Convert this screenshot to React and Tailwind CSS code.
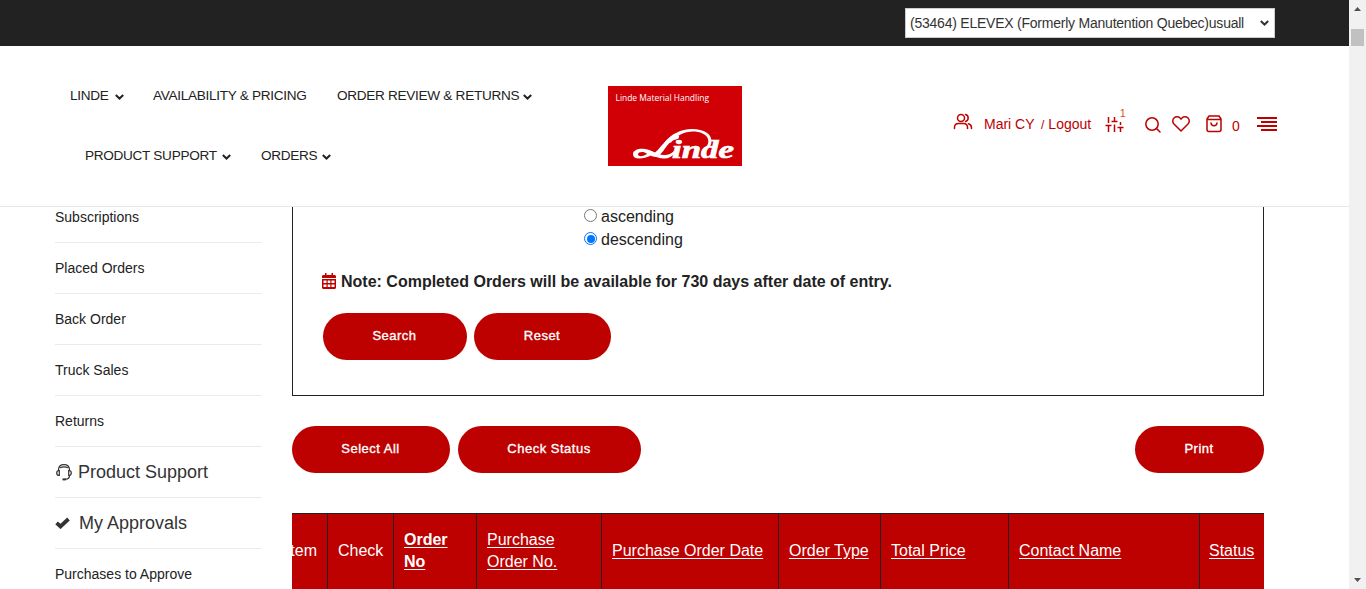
import React from "react";

function Chevron({ className = "" }) {
  return (
    <svg className={`shrink-0 ${className}`} width="9" height="6" viewBox="0 0 9 6" fill="none" stroke="currentColor" strokeWidth="2">
      <path d="M.8 1 4.5 4.5 8.2 1" />
    </svg>
  );
}

function NavItem({ label, width, arrow = true }) {
  return (
    <a className={`flex items-center whitespace-nowrap text-[13.6px] leading-5 tracking-[-0.3px] text-[#222] ${width}`}>
      <span className="mt-px">{label}</span>
      {arrow && <Chevron className="mt-[2px] ml-auto" />}
    </a>
  );
}

function Logo() {
  return (
    <svg width="134" height="80" viewBox="0 0 134 80" className="block">
      <rect width="134" height="80" fill="#d10007" />
      <text x="7.500" y="15.300" textLength="93.500" lengthAdjust="spacingAndGlyphs" fill="#fff" fontSize="9.800" fontFamily="'Open Sans', sans-serif">
        Linde Material Handling
      </text>
      <g fill="#fff">
        <path d="M56 57C63 48 73 43 84 43c12 0 20 5 19.500 13-.2 3-2 5.500-4 6l-2-1c2.500-2 3.500-4.500 2.500-8C98.500 48 92 45.500 85 45.500 76 45.500 68 50 63 56.500Z" />
        <path d="M56 57c-4 4-8 10-13.500 13l6.500 1c5-3 8-9 11.500-13 2.500-3 5-4 7.500-4.500 2.500-.5 3.500-2 3-3.500-4-1.500-10.500 2-15 7Z" />
        <path fillRule="evenodd" d="M25 68c0-4 6-6 12-5 7 1.200 12 5.500 19 6 4 .2 7-1 10-4l1 1.500c-3 4.500-7 6.500-12 6-5-.3-9-2.500-12-3-4 2-8 3-12 3-4 0-6-1.500-6-4.500Zm5 .3c0 2.800 6 2.200 9-.5-3-2.800-9-2.300-9 .5Z" />
      </g>
      <text x="64" y="72" textLength="62" lengthAdjust="spacingAndGlyphs" fill="#fff" stroke="#fff" strokeWidth=".7" fontSize="25.500" fontWeight="bold" fontStyle="italic" fontFamily="'Liberation Serif', serif">
        inde
      </text>
    </svg>
  );
}

const stroke = { fill: "none", stroke: "#bd0000", strokeWidth: 1.5, strokeLinecap: "round", strokeLinejoin: "round" };

function UserIcon() {
  return (
    <svg width="20" height="18" viewBox="0 0 20 18" {...stroke}>
      <circle cx="8" cy="5" r="3.500" />
      <path d="M1.500 15.500v-1c0-2.500 1.500-4 4-4h5c2.500 0 4 1.500 4 4v1M12.500 1.600a3.500 3.500 0 0 1 0 6.800M15.500 10.700c2 .6 3 2 3 4v.8" />
    </svg>
  );
}

function SlidersIcon() {
  return (
    <svg width="19" height="17" viewBox="0 0 19 17" {...stroke} strokeLinecap="butt">
      <path d="M3.500 1v6M3.500 9v7M.5 9.500h6M9.500 1v5M6.500 5.500h6M9.500 8.500v7.500M15.500 6v3M15.500 11v5M12.500 11.500h6" />
    </svg>
  );
}

function SearchIcon() {
  return (
    <svg width="16" height="16" viewBox="0 0 16 16" {...stroke}>
      <circle cx="7" cy="7" r="6.200" />
      <path d="m11.500 11.500 3.500 3.500" />
    </svg>
  );
}

function HeartIcon() {
  return (
    <svg width="18" height="16" viewBox="0 0 18 16" {...stroke}>
      <path d="M9 15 2 8C.3 6.200.4 3.500 2 2c1.700-1.600 4.500-1.500 6 0l1 1.100L10 2c1.500-1.500 4.300-1.600 6 0 1.600 1.500 1.700 4.200 0 6Z" />
    </svg>
  );
}

function BagIcon() {
  return (
    <svg width="16" height="18" viewBox="0 0 16 18" {...stroke}>
      <path d="M1 4 3 1h10l2 3v10.500c0 1-.7 2-2 2H3c-1.300 0-2-1-2-2ZM1 4.500h14M5 8c.3 3.700 5.700 3.700 6 0" />
    </svg>
  );
}

function TopBar() {
  return (
    <div className="flex h-[46px] shrink-0 items-start justify-end bg-[#222] pt-2 pr-[74px]">
      <div className="flex h-[30px] w-[370px] items-center justify-between border border-[#ccc] bg-white pr-[5px] pl-1 text-[14px] tracking-[-0.23px] text-[#333]">
        <span className="whitespace-nowrap">(53464) ELEVEX (Formerly Manutention Quebec)usuall</span>
        <Chevron />
      </div>
    </div>
  );
}

function Header() {
  return (
    <header className="flex h-[161px] shrink-0 border-b border-[#e7e7e7] bg-white">
      <nav className="flex w-[608px] flex-col gap-[39px] pt-[39px] pl-[70px]">
        <div className="flex">
          <NavItem label="LINDE" width="w-[54px] mr-[29px]" />
          <NavItem label="AVAILABILITY & PRICING" arrow={false} width="w-[154px] mr-[30px]" />
          <NavItem label="ORDER REVIEW & RETURNS" width="w-[195px]" />
        </div>
        <div className="flex pl-[15px]">
          <NavItem label="PRODUCT SUPPORT" width="w-[146px] mr-[30px]" />
          <NavItem label="ORDERS" width="w-[70px]" />
        </div>
      </nav>
      <div className="pt-10">
        <Logo />
      </div>
      <div className="flex flex-1 items-start pl-[211px] text-[14px] leading-5 whitespace-nowrap text-[#bd0000]">
        <div className="mt-[67px] w-[31px]"><UserIcon /></div>
        <span className="mt-[68px] w-[57px]">Mari CY</span>
        <span className="mt-[68px] w-[64px]"><span className="mr-1 text-[12px]">/</span>Logout</span>
        <div className="mt-[70px] w-[15px]"><SlidersIcon /></div>
        <span className="mt-[58px] w-[25px] text-[10px] text-[#d94a00]">1</span>
        <div className="mt-[71px] w-[27px]"><SearchIcon /></div>
        <div className="mt-[70px] w-[34px]"><HeartIcon /></div>
        <div className="mt-[69px] w-[26px]"><BagIcon /></div>
        <span className="mt-[70px] w-[25px]">0</span>
        <div className="mt-[71px] flex w-[20px] flex-col items-end gap-[2px]">
          <i className="h-[2px] w-5 bg-[#bd0000]" />
          <i className="h-[2px] w-4 bg-[#bd0000]" />
          <i className="h-[2px] w-5 bg-[#bd0000]" />
          <i className="h-[2px] w-4 bg-[#bd0000]" />
        </div>
      </div>
    </header>
  );
}

function HeadsetIcon() {
  return (
    <svg width="17" height="18" viewBox="0 0 17 18" fill="none" stroke="#333" strokeWidth="1.200">
      <path d="M3.500 8V6.500c.5-6.500 10.500-6.500 11 0V8M5 4.700c2.500-1 5.500-1 8 0M4.300 7.500v5C2.300 12.500 1.700 11.500 1.700 10s.6-2.500 2.600-2.500ZM13.700 7.500v5c2 0 2.600-1 2.600-2.500s-.6-2.500-2.600-2.500ZM14.500 12.500c0 2.500-1 3.700-4 3.700" />
      <path d="M7.500 16.400h3.500" strokeWidth="2" />
    </svg>
  );
}

function CheckIcon() {
  return (
    <svg width="15" height="12" viewBox="0 0 15 12" fill="none" stroke="#333" strokeWidth="3.800">
      <path d="m1.600 5.800 3.900 3.700 8-7.500" />
    </svg>
  );
}

function Sidebar() {
  const row = "flex h-[51px] shrink-0 items-center border-b border-[#ebebeb]";
  return (
    <aside className="-mt-[15px] flex w-[207px] flex-col text-[14px] text-[#222]">
      {["Subscriptions", "Placed Orders", "Back Order", "Truck Sales", "Returns"].map((label) => (
        <a key={label} className={row}>{label}</a>
      ))}
      <a className={`${row} gap-[6px] text-[18px] text-[#333]`}><HeadsetIcon />Product Support</a>
      <a className={`${row} gap-[9px] text-[18px] text-[#333]`}><CheckIcon />My Approvals</a>
      <a className={row}>Purchases to Approve</a>
    </aside>
  );
}

function Pill({ children, className }) {
  return (
    <button className={`h-[47px] rounded-[24px] bg-[#bd0000] pr-px pb-[2px] text-[13px] tracking-[0.5px] text-white [-webkit-text-stroke:0.35px_white] ${className}`}>
      {children}
    </button>
  );
}

function Radio({ checked, label }) {
  return (
    <label className="flex h-[23px] items-center gap-[4px]">
      <span className={`mb-[2px] flex size-[13px] items-center justify-center rounded-full border bg-white ${checked ? "border-[#0075ff]" : "border-[#767676]"}`}>
        {checked && <i className="size-[8px] rounded-full bg-[#0075ff]" />}
      </span>
      {label}
    </label>
  );
}

function CalendarIcon() {
  return (
    <svg className="mb-[2px]" width="14" height="16" viewBox="0 0 14 16" fill="#bd0000">
      <path d="M3 0h1.500v2h5V0H11v2h2l1 1v2H0V3l1-1h2Z" />
      <path fillRule="evenodd" d="M0 6h14v9l-1 1H1l-1-1ZM1.500 7.500v2.500h3V7.500Zm4.200 0v2.500h2.600V7.500Zm3.800 0v2.500h3V7.500ZM1.500 11.500V14h3v-2.500Zm4.200 0V14h2.600v-2.500Zm3.800 0V14h3v-2.500Z" />
    </svg>
  );
}

function SearchPanel() {
  return (
    <section className="h-[191px] border border-t-0 border-[#222] pl-[29px]">
      <div className="-mt-[2px] pl-[262px]">
        <Radio label="ascending" />
        <Radio label="descending" checked />
      </div>
      <p className="mt-[19px] flex h-6 items-center gap-[5px] font-bold"><CalendarIcon />Note: Completed Orders will be available for 730 days after date of entry.</p>
      <div className="mt-[19px] ml-[1px] flex gap-[7px]">
        <Pill className="w-[144px]">Search</Pill>
        <Pill className="w-[137px]">Reset</Pill>
      </div>
    </section>
  );
}

const columns = [
  ["Check", "w-[66px] pl-[10px]", ""],
  ["Order No", "w-[83px] pl-[10px]", "w-[50px] underline font-bold"],
  ["Purchase Order No.", "w-[125px] pl-[10px]", "w-[80px] underline"],
  ["Purchase Order Date", "w-[177px] pl-[10px]", "underline"],
  ["Order Type", "w-[102px] pl-[10px]", "underline"],
  ["Total Price", "w-[128px] pl-[10px]", "underline"],
  ["Contact Name", "w-[191px] pl-[10px]", "underline"],
  ["Status", "w-[65px] pl-[9px]", "underline"],
];

function OrdersHead() {
  return (
    <div className="mt-10 flex h-[80px] w-[972px] overflow-hidden border-t border-[#222] bg-[#bd0000] text-[16px] leading-[22px] text-white">
      <div className="flex w-[35px] shrink-0 items-center justify-end pr-[10px] pb-[6px]">Item</div>
      {columns.map(([label, width, text]) => (
        <div key={label} className={`flex shrink-0 items-center border-l border-[#222] pb-[6px] ${width}`}>
          <span className={`shrink-0 underline-offset-2 ${text}`}>{label}</span>
        </div>
      ))}
    </div>
  );
}

export default function App() {
  return (
    <div className="flex h-[589px] w-[1366px] overflow-hidden bg-white font-['Liberation_Sans',Arial,sans-serif] text-[16px] text-[#222]">
      <div className="flex w-[1349px] shrink-0 flex-col">
        <TopBar />
        <Header />
        <div className="flex min-h-0 flex-1 gap-[30px] overflow-hidden pl-[55px]">
          <Sidebar />
          <main className="w-[972px]">
            <SearchPanel />
            <div className="mt-[30px] flex gap-2">
              <Pill className="w-[158px]">Select All</Pill>
              <Pill className="w-[183px]">Check Status</Pill>
              <Pill className="ml-auto w-[129px]">Print</Pill>
            </div>
            <OrdersHead />
          </main>
        </div>
      </div>
      <div className="flex w-[17px] flex-col items-center justify-between bg-[#f1f1f1] py-[7px]">
        <div className="flex flex-col items-center">
          <svg width="7" height="4" viewBox="0 0 7 4"><path d="M0 4 3.500 0 7 4Z" fill="#505050" /></svg>
          <i className="mt-[18px] h-[17px] w-[13px] bg-[#c1c1c1]" />
        </div>
        <svg width="7" height="4" viewBox="0 0 7 4"><path d="M0 0 3.500 4 7 0Z" fill="#505050" /></svg>
      </div>
    </div>
  );
}
